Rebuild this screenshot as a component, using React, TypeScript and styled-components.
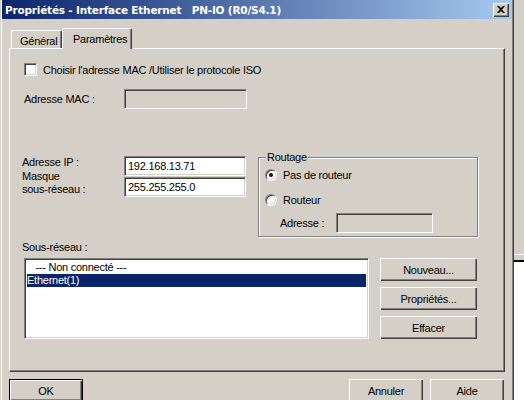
import styled, { createGlobalStyle } from 'styled-components';

const Face = '#D4D0C8';
const Shadow = '#808080';
const Dark = '#404040';
const Select = '#0A246A';

const GlobalStyle = createGlobalStyle`
    html, body {
        margin: 0;
        padding: 0;
        background: #ffffff;
    }
    body {
        font-family: "Liberation Sans", Arial, sans-serif;
        font-size: 11px;
        letter-spacing: -0.25px;
        color: #000;
    }
`;

const Screen = styled.div`
    display: flex;
    width: 524px;
    height: 400px;
    overflow: hidden;
`;

const Window = styled.div`
    flex: none;
    width: 514px;
    height: 420px;
    background: ${Face};
    box-shadow: inset 1px 0 0 ${Face}, inset 2px 0 0 #fff, inset -1px 0 0 ${Dark}, inset -2px 0 0 ${Shadow};
    display: flex;
    flex-direction: column;
`;

const Behind = styled.div`
    flex: 1;
    display: flex;
    flex-direction: column;
    background: ${Face};

    div.edge {
        margin-top: 254px;
        height: 5px;
        border-top: 1px solid #fff;
        border-bottom: 2px solid #000;
    }
    div.fill {
        flex: 1;
        background: #fff;
    }
`;

const TitleBar = styled.div`
    height: 19px;
    margin: 0 2px 0 2px;
    display: flex;
    align-items: center;
    justify-content: space-between;
    padding: 0 3px 0 3px;
    background: linear-gradient(to right, ${Select} 0%, #A6CAF0 100%);

    span.caption {
        color: #fff;
        font-weight: bold;
        font-family: "DejaVu Sans", Tahoma, sans-serif;
        font-size: 10.5px;
        white-space: pre;
        letter-spacing: -0.2px;
    }
`;

const CloseButton = styled.div`
    width: 16px;
    height: 14px;
    box-sizing: border-box;
    background: ${Face};
    display: flex;
    align-items: center;
    justify-content: center;
    box-shadow: inset 1px 1px 0 #fff, inset -1px -1px 0 ${Dark}, inset -2px -2px 0 ${Shadow};
`;

const TabRow = styled.div`
    display: flex;
    align-items: flex-end;
    margin-top: 9px;
    padding-left: 11px;
    height: 20px;
    position: relative;
    z-index: 1;
`;

const Tab = styled.div<{ $active?: boolean }>`
    box-sizing: border-box;
    width: ${p => (p.$active ? 70 : 51)}px;
    height: ${p => (p.$active ? 21 : 18)}px;
    margin-bottom: ${p => (p.$active ? -1 : 0)}px;
    padding: ${p => (p.$active ? '4px 0 0 10px' : '4px 0 0 8px')};
    background: ${Face};
    border-left: 1px solid #fff;
    border-top: 1px solid #fff;
    border-right: 1px solid ${Dark};
    box-shadow: inset -1px 0 0 ${Shadow};
    border-radius: 2px 2px 0 0;
`;

const Panel = styled.div`
    box-sizing: border-box;
    margin: 0 9px;
    height: 324px;
    border-left: 1px solid #fff;
    border-top: 1px solid #fff;
    border-right: 1px solid ${Dark};
    border-bottom: 1px solid ${Dark};
    box-shadow: inset -1px -1px 0 ${Shadow};
    display: flex;
    flex-direction: column;
    padding: 14px 0 0 14px;
`;

const sunken = `
    box-sizing: border-box;
    border-top: 1px solid ${Shadow};
    border-left: 1px solid ${Shadow};
    border-right: 1px solid #fff;
    border-bottom: 1px solid #fff;
    box-shadow: inset 1px 1px 0 ${Dark}, inset -1px -1px 0 ${Face};
`;

const CheckRow = styled.div`
    display: flex;
    align-items: center;
    height: 13px;
    gap: 6px;
`;

const CheckBox = styled.div`
    ${sunken}
    width: 13px;
    height: 13px;
    background: #fff;
`;

const FieldRow = styled.div<{ $top: number; $indent?: number }>`
    display: flex;
    align-items: center;
    margin-top: ${p => p.$top}px;
    padding-left: ${p => p.$indent ?? 0}px;
`;

const Label = styled.div<{ $width?: number }>`
    width: ${p => p.$width ?? 100}px;
    flex: none;
    line-height: 13px;
`;

const TextField = styled.div<{ $width: number; $disabled?: boolean }>`
    ${sunken}
    width: ${p => p.$width}px;
    height: 20px;
    background: ${p => (p.$disabled ? Face : '#fff')};
    padding: 3px 0 0 3px;
    line-height: 13px;
`;

const IpSection = styled.div`
    display: flex;
    margin-top: 47px;
    margin-left: -2px;
    gap: 12px;
`;

const IpGrid = styled.div`
    display: grid;
    grid-template-columns: 102px 122px;
    grid-template-rows: 21px 20px;
    align-content: start;
`;

const TwoLineLabel = styled(Label)`
    margin-top: -7px;
`;

const GroupBox = styled.div`
    position: relative;
    box-sizing: border-box;
    margin-top: 1px;
    width: 220px;
    height: 80px;
    border: 1px solid ${Shadow};
    box-shadow: inset 1px 1px 0 #fff, 1px 1px 0 #fff;
    display: flex;
    flex-direction: column;
    padding: 10px 0 0 6px;

    span.legend {
        position: absolute;
        top: -7px;
        left: 7px;
        padding: 0 1px;
        background: ${Face};
        line-height: 13px;
    }
`;

const RadioRow = styled.div<{ $top: number }>`
    display: flex;
    align-items: center;
    gap: 6px;
    height: 13px;
    margin-top: ${p => p.$top}px;
`;

const Radio = styled.div<{ $checked?: boolean }>`
    box-sizing: border-box;
    width: 12px;
    height: 12px;
    border-radius: 50%;
    background: #fff;
    border-top: 1px solid ${Shadow};
    border-left: 1px solid ${Shadow};
    border-right: 1px solid #fff;
    border-bottom: 1px solid #fff;
    box-shadow: inset 1px 1px 0 ${Dark}, inset -1px -1px 0 ${Face};
    display: flex;
    align-items: center;
    justify-content: center;

    &::after {
        content: '';
        display: ${p => (p.$checked ? 'block' : 'none')};
        width: 4px;
        height: 4px;
        border-radius: 50%;
        background: #000;
    }
`;

const SubLabel = styled.div`
    margin-top: 4px;
    margin-left: -2px;
    line-height: 13px;
`;

const ListRow = styled.div`
    display: flex;
    gap: 11px;
    margin-top: 4px;
`;

const ListBox = styled.div`
    ${sunken}
    width: 345px;
    height: 81px;
    background: #fff;
    padding: 2px;
`;

const ListItem = styled.div<{ $selected?: boolean }>`
    height: 13px;
    line-height: 13px;
    white-space: pre;
    background: ${p => (p.$selected ? Select : 'transparent')};
    color: ${p => (p.$selected ? '#fff' : '#000')};
`;

const ButtonColumn = styled.div`
    display: flex;
    flex-direction: column;
    gap: 6px;
`;

const Button = styled.div<{ $width?: number; $default?: boolean }>`
    box-sizing: border-box;
    width: ${p => p.$width ?? 97}px;
    height: 23px;
    display: flex;
    align-items: center;
    justify-content: center;
    background: ${Face};
    border: ${p => (p.$default ? '1px solid #000' : 'none')};
    box-shadow: inset 1px 1px 0 #fff, inset -1px -1px 0 ${Dark}, inset -2px -2px 0 ${Shadow};
`;

const Footer = styled.div`
    display: flex;
    margin-top: 7px;
    padding: 0 10px 0 9px;
    gap: 7px;

    div.spacer {
        flex: 1;
    }
`;

export default function App() {
    return (
        <Screen>
            <GlobalStyle />
            <Window>
                <TitleBar>
                    <span className="caption">{'Propriétés - Interface Ethernet   PN-IO (R0/S4.1)'}</span>
                    <CloseButton>
                        <svg width="8" height="7" viewBox="0 0 8 7">
                            <path d="M0 0 L2 0 L4 2 L6 0 L8 0 L5 3.5 L8 7 L6 7 L4 5 L2 7 L0 7 L3 3.5 Z" fill="#000" />
                        </svg>
                    </CloseButton>
                </TitleBar>

                <TabRow>
                    <Tab>Général</Tab>
                    <Tab $active>Paramètres</Tab>
                </TabRow>

                <Panel>
                    <CheckRow>
                        <CheckBox />
                        <span>Choisir l'adresse MAC /Utiliser le protocole ISO</span>
                    </CheckRow>

                    <FieldRow $top={13}>
                        <Label>Adresse MAC :</Label>
                        <TextField $width={123} $disabled />
                    </FieldRow>

                    <IpSection>
                        <IpGrid>
                            <Label $width={102}>Adresse IP :</Label>
                            <TextField $width={122}>192.168.13.71</TextField>
                            <TwoLineLabel $width={102}>
                                Masque
                                <br />
                                sous-réseau :
                            </TwoLineLabel>
                            <TextField $width={122}>255.255.255.0</TextField>
                        </IpGrid>

                        <GroupBox>
                            <span className="legend">Routage</span>
                            <RadioRow $top={0}>
                                <Radio $checked />
                                <span>Pas de routeur</span>
                            </RadioRow>
                            <RadioRow $top={12}>
                                <Radio />
                                <span>Routeur</span>
                            </RadioRow>
                            <FieldRow $top={7} $indent={15}>
                                <Label $width={56}>Adresse :</Label>
                                <TextField $width={97} $disabled />
                            </FieldRow>
                        </GroupBox>
                    </IpSection>

                    <SubLabel>Sous-réseau :</SubLabel>
                    <ListRow>
                        <ListBox>
                            <ListItem>{'   --- Non connecté ---'}</ListItem>
                            <ListItem $selected>Ethernet(1)</ListItem>
                        </ListBox>
                        <ButtonColumn>
                            <Button>Nouveau...</Button>
                            <Button>Propriétés...</Button>
                            <Button>Effacer</Button>
                        </ButtonColumn>
                    </ListRow>
                </Panel>

                <Footer>
                    <Button $width={74} $default>OK</Button>
                    <div className="spacer" />
                    <Button $width={74}>Annuler</Button>
                    <Button $width={74}>Aide</Button>
                </Footer>
            </Window>
            <Behind>
                <div className="edge" />
                <div className="fill" />
            </Behind>
        </Screen>
    );
}
